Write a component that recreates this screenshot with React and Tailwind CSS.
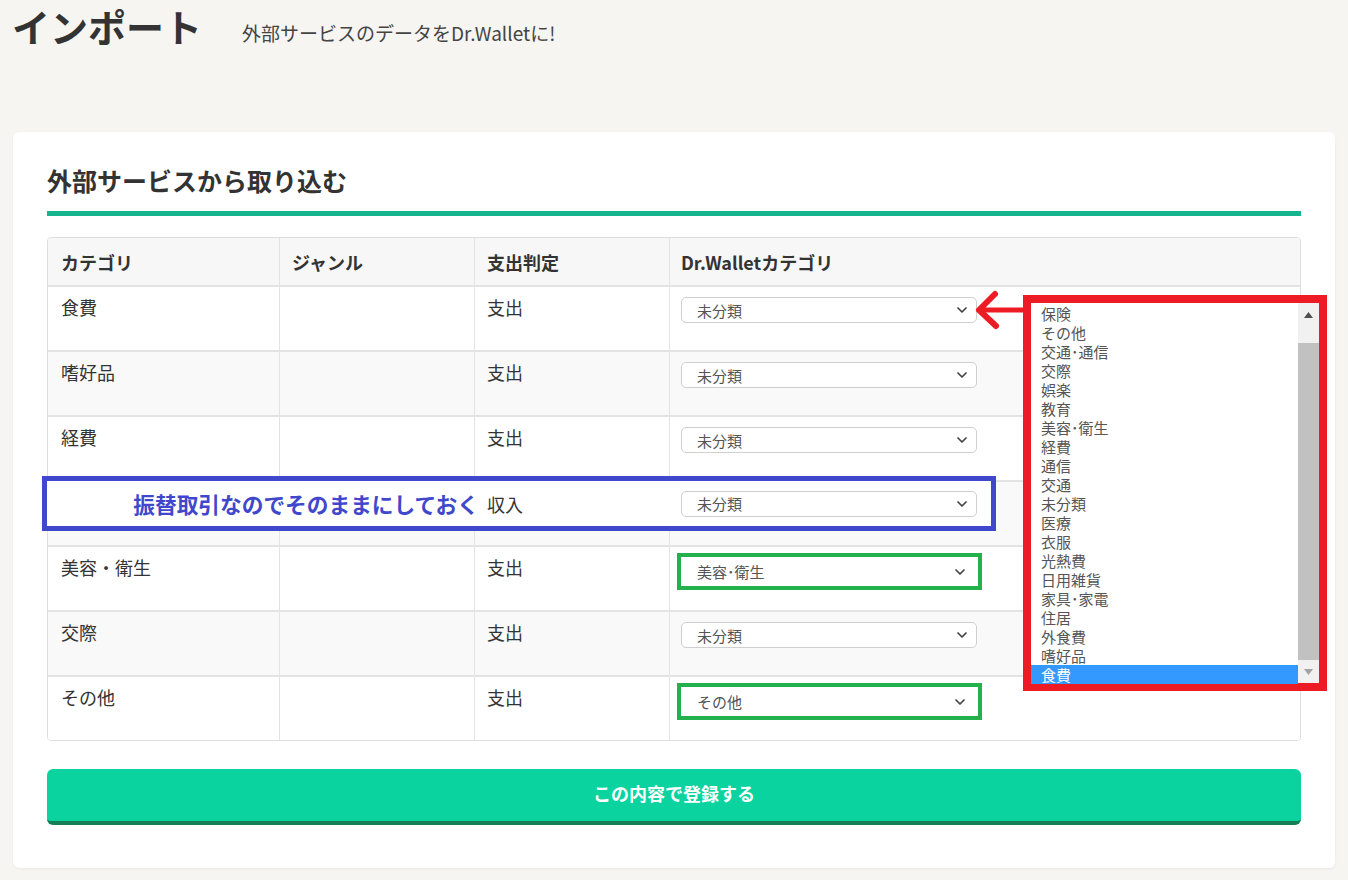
import React from "react";
import { ChevronDown } from "lucide-react";

const rows = [
  { category: "食費", type: "支出", value: "未分類" },
  { category: "嗜好品", type: "支出", value: "未分類" },
  { category: "経費", type: "支出", value: "未分類" },
  { category: "", type: "収入", value: "未分類" },
  { category: "美容・衛生", type: "支出", value: "美容･衛生", marked: true },
  { category: "交際", type: "支出", value: "未分類" },
  { category: "その他", type: "支出", value: "その他", marked: true },
];

const options = [
  "保険",
  "その他",
  "交通･通信",
  "交際",
  "娯楽",
  "教育",
  "美容･衛生",
  "経費",
  "通信",
  "交通",
  "未分類",
  "医療",
  "衣服",
  "光熱費",
  "日用雑貨",
  "家具･家電",
  "住居",
  "外食費",
  "嗜好品",
  "食費",
];

const Select = ({ value }) => (
  <div className="flex h-[26px] w-[296px] items-center justify-between rounded-[5px] border border-[#cfcfcf] bg-white pl-[15px] pr-[6px] text-[15px] leading-none text-[#555]">
    <span>{value}</span>
    <ChevronDown size={16} strokeWidth={2.6} className="text-[#444]" />
  </div>
);

// select that was boxed in green on the screenshot
const MarkedSelect = ({ value }) => (
  <div className="-ml-[4px] -mt-[4px] flex h-[37px] w-[305px] items-center justify-between border-[4px] border-[#22b14c] bg-white pl-[16px] pr-[10px] text-[15px] leading-none text-[#555]">
    <span>{value}</span>
    <ChevronDown size={16} strokeWidth={2.6} className="text-[#444]" />
  </div>
);

const TableRow = ({ row, index }) => (
  <div
    className={`grid h-[65px] grid-cols-[231px_195px_195px_1fr] border-t-2 border-[#e3e3e3] text-[18px] leading-[26px] text-[#333] ${
      index % 2 === 1 ? "bg-[#f9f9f9]" : "bg-white"
    }`}
  >
    <div className="pl-[13px] pt-[7px]">{row.category}</div>
    <div className="border-l border-[#e3e3e3]" />
    <div className="border-l border-[#e3e3e3] pl-[12px] pt-[7px]">{row.type}</div>
    <div className="border-l border-[#e3e3e3] pl-[11px] pt-[10px]">
      {row.marked ? <MarkedSelect value={row.value} /> : <Select value={row.value} />}
    </div>
  </div>
);

const ListBox = () => (
  <div className="absolute left-[1023px] top-[295px] flex h-[396px] w-[304px] border-[8px] border-[#ed1c24] bg-white">
    <div className="w-[267px] pt-[1px] text-[15px] leading-[19px] text-[#555]">
      {options.map((opt) => (
        <div
          key={opt}
          className={`pl-[10px] ${opt === "食費" ? "bg-[#3399ff] text-white" : ""}`}
        >
          {opt}
        </div>
      ))}
    </div>
    <div className="flex w-[21px] flex-col">
      <div className="flex h-[40px] justify-center bg-[#f1f1f1] pt-[9px]">
        <svg width="9" height="6" viewBox="0 0 9 6">
          <polygon points="0,6 4.5,0 9,6" fill="#505050" />
        </svg>
      </div>
      <div className="flex-1 bg-[#c1c1c1]" />
      <div className="flex h-[23px] justify-center bg-[#f1f1f1] pt-[9px]">
        <svg width="9" height="6" viewBox="0 0 9 6">
          <polygon points="0,0 9,0 4.5,6" fill="#a3a3a3" />
        </svg>
      </div>
    </div>
  </div>
);

export default function App() {
  return (
    <div className="relative min-h-[880px] bg-[#f6f5f1] font-['Noto_Sans_CJK_JP','Noto_Sans',sans-serif] text-[#333]">
      <div className="flex h-[50px] items-start pl-[12px]">
        <h1 className="text-[38px] font-bold leading-[52px] text-[#333]">インポート</h1>
        <p className="ml-[40px] mt-[20px] text-[19px] leading-[26px] text-[#444]">
          外部サービスのデータをDr.Walletに!
        </p>
      </div>

      <div className="mx-[13px] mt-[82px] rounded-[6px] bg-white px-[34px] pb-[43px] pt-[32px] shadow-[0_1px_3px_rgba(0,0,0,0.06)]">
        <h2 className="text-[25px] font-bold leading-[32px] text-[#333]">外部サービスから取り込む</h2>
        <div className="mt-[15px] h-[5px] bg-[#16b48e]" />

        <div className="mt-[21px] overflow-hidden rounded-[4px] border border-[#dedede]">
          <div className="grid h-[47px] grid-cols-[231px_195px_195px_1fr] items-center bg-[#f7f7f7] text-[18px] font-bold leading-[26px] text-[#333]">
            <div className="pl-[13px]">カテゴリ</div>
            <div className="flex h-full items-center border-l border-[#e3e3e3] pl-[12px]">ジャンル</div>
            <div className="flex h-full items-center border-l border-[#e3e3e3] pl-[12px]">支出判定</div>
            <div className="flex h-full items-center border-l border-[#e3e3e3] pl-[11px]">Dr.Walletカテゴリ</div>
          </div>
          {rows.map((row, i) => (
            <TableRow key={i} row={row} index={i} />
          ))}
        </div>

        <button className="mt-[28px] flex h-[56px] w-full items-center justify-center rounded-[6px] border-b-[4px] border-[#147e55] bg-[#0ad3a0] pb-[3px] text-[18px] font-bold text-white">
          この内容で登録する
        </button>
      </div>

      {/* annotation: blue box over the transfer row */}
      <div className="absolute left-[42px] top-[476px] flex h-[55px] w-[954px] items-center border-[5px] border-[#3f48cc] bg-white">
        <div className="w-[432px] text-right text-[21.7px] font-bold leading-[28px] text-[#3f48cc]">
          振替取引なのでそのままにしておく
        </div>
        <div className="w-[202px] pl-[8px] text-[18px] leading-[26px] text-[#333]">収入</div>
        <Select value="未分類" />
      </div>

      {/* annotation: red arrow + opened list */}
      <svg className="absolute left-[972px] top-[288px]" width="56" height="44" viewBox="0 0 56 44">
        <path d="M56 22 L8 22" stroke="#ed1c24" strokeWidth="5" fill="none" />
        <path d="M23 6 L7 22 L24 38" stroke="#ed1c24" strokeWidth="6" strokeLinecap="round" strokeLinejoin="round" fill="none" />
      </svg>
      <ListBox />
    </div>
  );
}
